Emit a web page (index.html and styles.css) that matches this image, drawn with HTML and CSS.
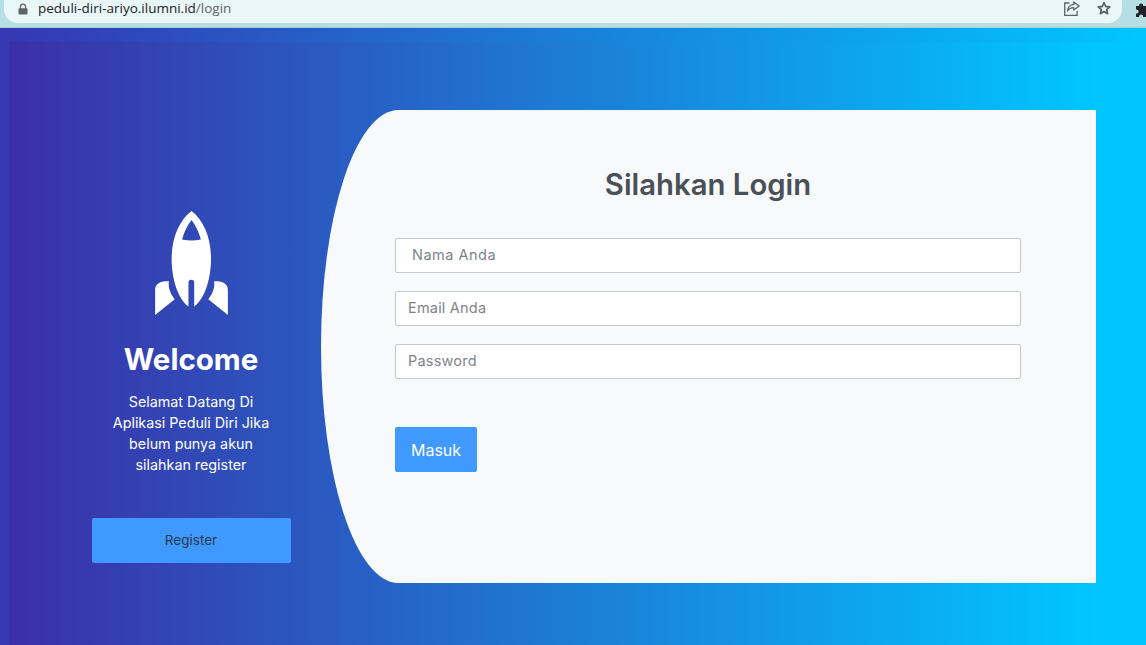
FILE: index.html
```html
<!DOCTYPE html>
<html lang="id">
<head>
<meta charset="utf-8">
<title>Login</title>
<link rel="stylesheet" href="styles.css">
</head>
<body>
<header class="browser">
  <div class="omnibox">
    <div class="address">
      <svg class="lock" viewBox="0 0 12 14" width="12" height="14"><path d="M2.2 6V4.2a3.8 3.8 0 0 1 7.6 0V6h.7c.5 0 .9.4.9.9v5.700c0 .5-.4.9-.9.9h-9c-.5 0-.9-.4-.9-.9V6.900c0-.5.4-.9.9-.9zm1.500 0h4.600V4.200a2.300 2.300 0 0 0-4.600 0z" fill="#5f6368"/></svg>
      <span class="url">peduli-diri-ariyo.ilumni.id<span class="url-path">/login</span></span>
    </div>
    <div class="actions">
      <svg viewBox="0 0 16 15" width="16" height="15" fill="none" stroke="#5f6368" stroke-width="1.300"><path d="M5.500 2H.7v12.300h12.400V10"/><path d="M9.800.9 15.200 5 9.800 9V6.700C7 6.700 5 7.600 3.600 10 3.800 6.700 6 3.800 9.800 3.400z" stroke-linejoin="round"/></svg>
      <svg viewBox="0 0 16 15" width="16" height="15" fill="none" stroke="#5f6368" stroke-width="1.800"><path d="M8 1.700 9.700 5.500l4.100.4-3.100 2.700.9 4-3.600-2.100-3.600 2.100.9-4-3.100-2.700 4.100-.4z" stroke-linejoin="round"/></svg>
    </div>
  </div>
  <svg class="puzzle" viewBox="0 0 14 15" width="14" height="15"><path d="M0 4h3.200a2 2 0 1 1 3.800 0H11v3.500a2 2 0 1 1 0 3.800V15H7a2 2 0 1 0-3.800 0H0v-3.500a2 2 0 1 0 0-3.800z" fill="#202124"/></svg>
</header>
<main class="page">
  <div class="inner">
    <section class="intro">
      <svg class="rocket" viewBox="77 33 216 309" width="73" height="104"><path fill="#fff" fill-rule="evenodd" d="M185 33C150 60 126 110 126 175c0 60 19 120 50 142v-72q0-8 8.500-8t8.500 8v72c31-22 50-82 50-142 0-65-23-115-58-142zm0 27c-11 14-22 36-28 58 18 4 38 4 56 0-6-22-17-44-28-58z"/><path fill="#fff" d="M77 342v-75c0-14 12-25 31-25h10c-3 18 4 38 17 53zM293 342v-75c0-14-12-25-31-25h-10c3 18-4 38-17 53z"/></svg>
      <h2 class="welcome">Welcome</h2>
      <p class="lead">Selamat Datang Di<br>Aplikasi Peduli Diri Jika<br>belum punya akun<br>silahkan register</p>
      <button class="btn btn-register" type="button">Register</button>
    </section>
    <section class="card">
      <h1 class="title">Silahkan Login</h1>
      <form class="form">
        <input class="field field-name" type="text" placeholder="Nama Anda">
        <input class="field" type="email" placeholder="Email Anda">
        <input class="field" type="password" placeholder="Password">
        <button class="btn btn-submit" type="button">Masuk</button>
      </form>
    </section>
  </div>
</main>
</body>
</html>
```
FILE: styles.css
```css
* { box-sizing: border-box; }
html, body { margin: 0; height: 100%; overflow: hidden; }
body {
  display: flex;
  flex-direction: column;
  font-family: "Inter", "Liberation Sans", sans-serif;
  background: #b9e0e5;
}
.browser {
  flex: 0 0 28px;
  height: 28px;
  display: flex;
  align-items: flex-start;
  overflow: hidden;
  background: #b6dfe4;
  border-bottom: 1px solid #a6ccd4;
}
.omnibox {
  flex: none;
  margin-left: 4px;
  width: 1118px;
  height: 23px;
  display: flex;
  align-items: center;
  justify-content: space-between;
  background: #eaf7f8;
  border-radius: 0 0 14px 14px;
  padding: 0 10px 6px 14px;
}
.address { display: flex; align-items: center; gap: 10px; }
.lock { width: 10px; height: 12px; }
.url {
  font-family: "Open Sans", "Liberation Sans", sans-serif;
  font-size: 13.500px;
  line-height: 17px;
  color: #202124;
}
.url-path { color: #5f6368; }
.actions { display: flex; align-items: center; gap: 16px; }
.puzzle { flex: none; margin: 2px 0 0 14px; }
.page {
  flex: 1;
  padding: 14px 0 0 9px;
  background: linear-gradient(to right, #3538b0, #00c6ff);
}
.inner {
  height: 100%;
  display: flex;
  align-items: flex-start;
  padding: 68px 50px 0 52px;
  background: linear-gradient(to right, #3b2fa8 0%, #00c6ff 96%);
}
.intro {
  flex: 0 0 260px;
  display: flex;
  flex-direction: column;
  align-items: center;
  padding-top: 101px;
  color: #fff;
  text-align: center;
}
.rocket { display: block; }
.welcome {
  margin: 24px 0 0;
  font-size: 29.500px;
  line-height: 40px;
  font-weight: 700;
  color: #fff;
}
.lead {
  margin: 12px 0 0;
  font-size: 14.300px;
  line-height: 21px;
  color: #fff;
}
.btn {
  border: 0;
  border-radius: 2px;
  background: #3f99ff;
  font-family: inherit;
  padding: 0;
  height: 45px;
}
.btn-register {
  width: 199px;
  margin-top: 43px;
  padding-bottom: 2px;
  font-size: 13.500px;
  color: #2b3a4a;
}
.card {
  flex: 1;
  height: 473px;
  padding: 53px 75px 0 74px;
  background: #f8f9fa;
  border-radius: 10% 0 0 10% / 50% 0 0 50%;
}
.title {
  margin: 0;
  font-size: 29.300px;
  line-height: 44px;
  font-weight: 600;
  color: #495057;
  text-align: center;
}
.form {
  display: flex;
  flex-direction: column;
  align-items: flex-start;
  gap: 18px;
  margin-top: 31px;
}
.field {
  width: 100%;
  height: 35px;
  border: 1px solid #c6c8ca;
  border-radius: 2px;
  background: #fff;
  padding: 0 12px 2px;
  font-family: inherit;
  font-size: 14.500px;
  letter-spacing: .2px;
  color: #495057;
}
.field::placeholder { color: #7d848b; opacity: 1; }
.field-name { padding-left: 16px; letter-spacing: .5px; }
.btn-submit {
  width: 82px;
  margin-top: 30px;
  font-size: 16px;
  color: #fff;
}
```
